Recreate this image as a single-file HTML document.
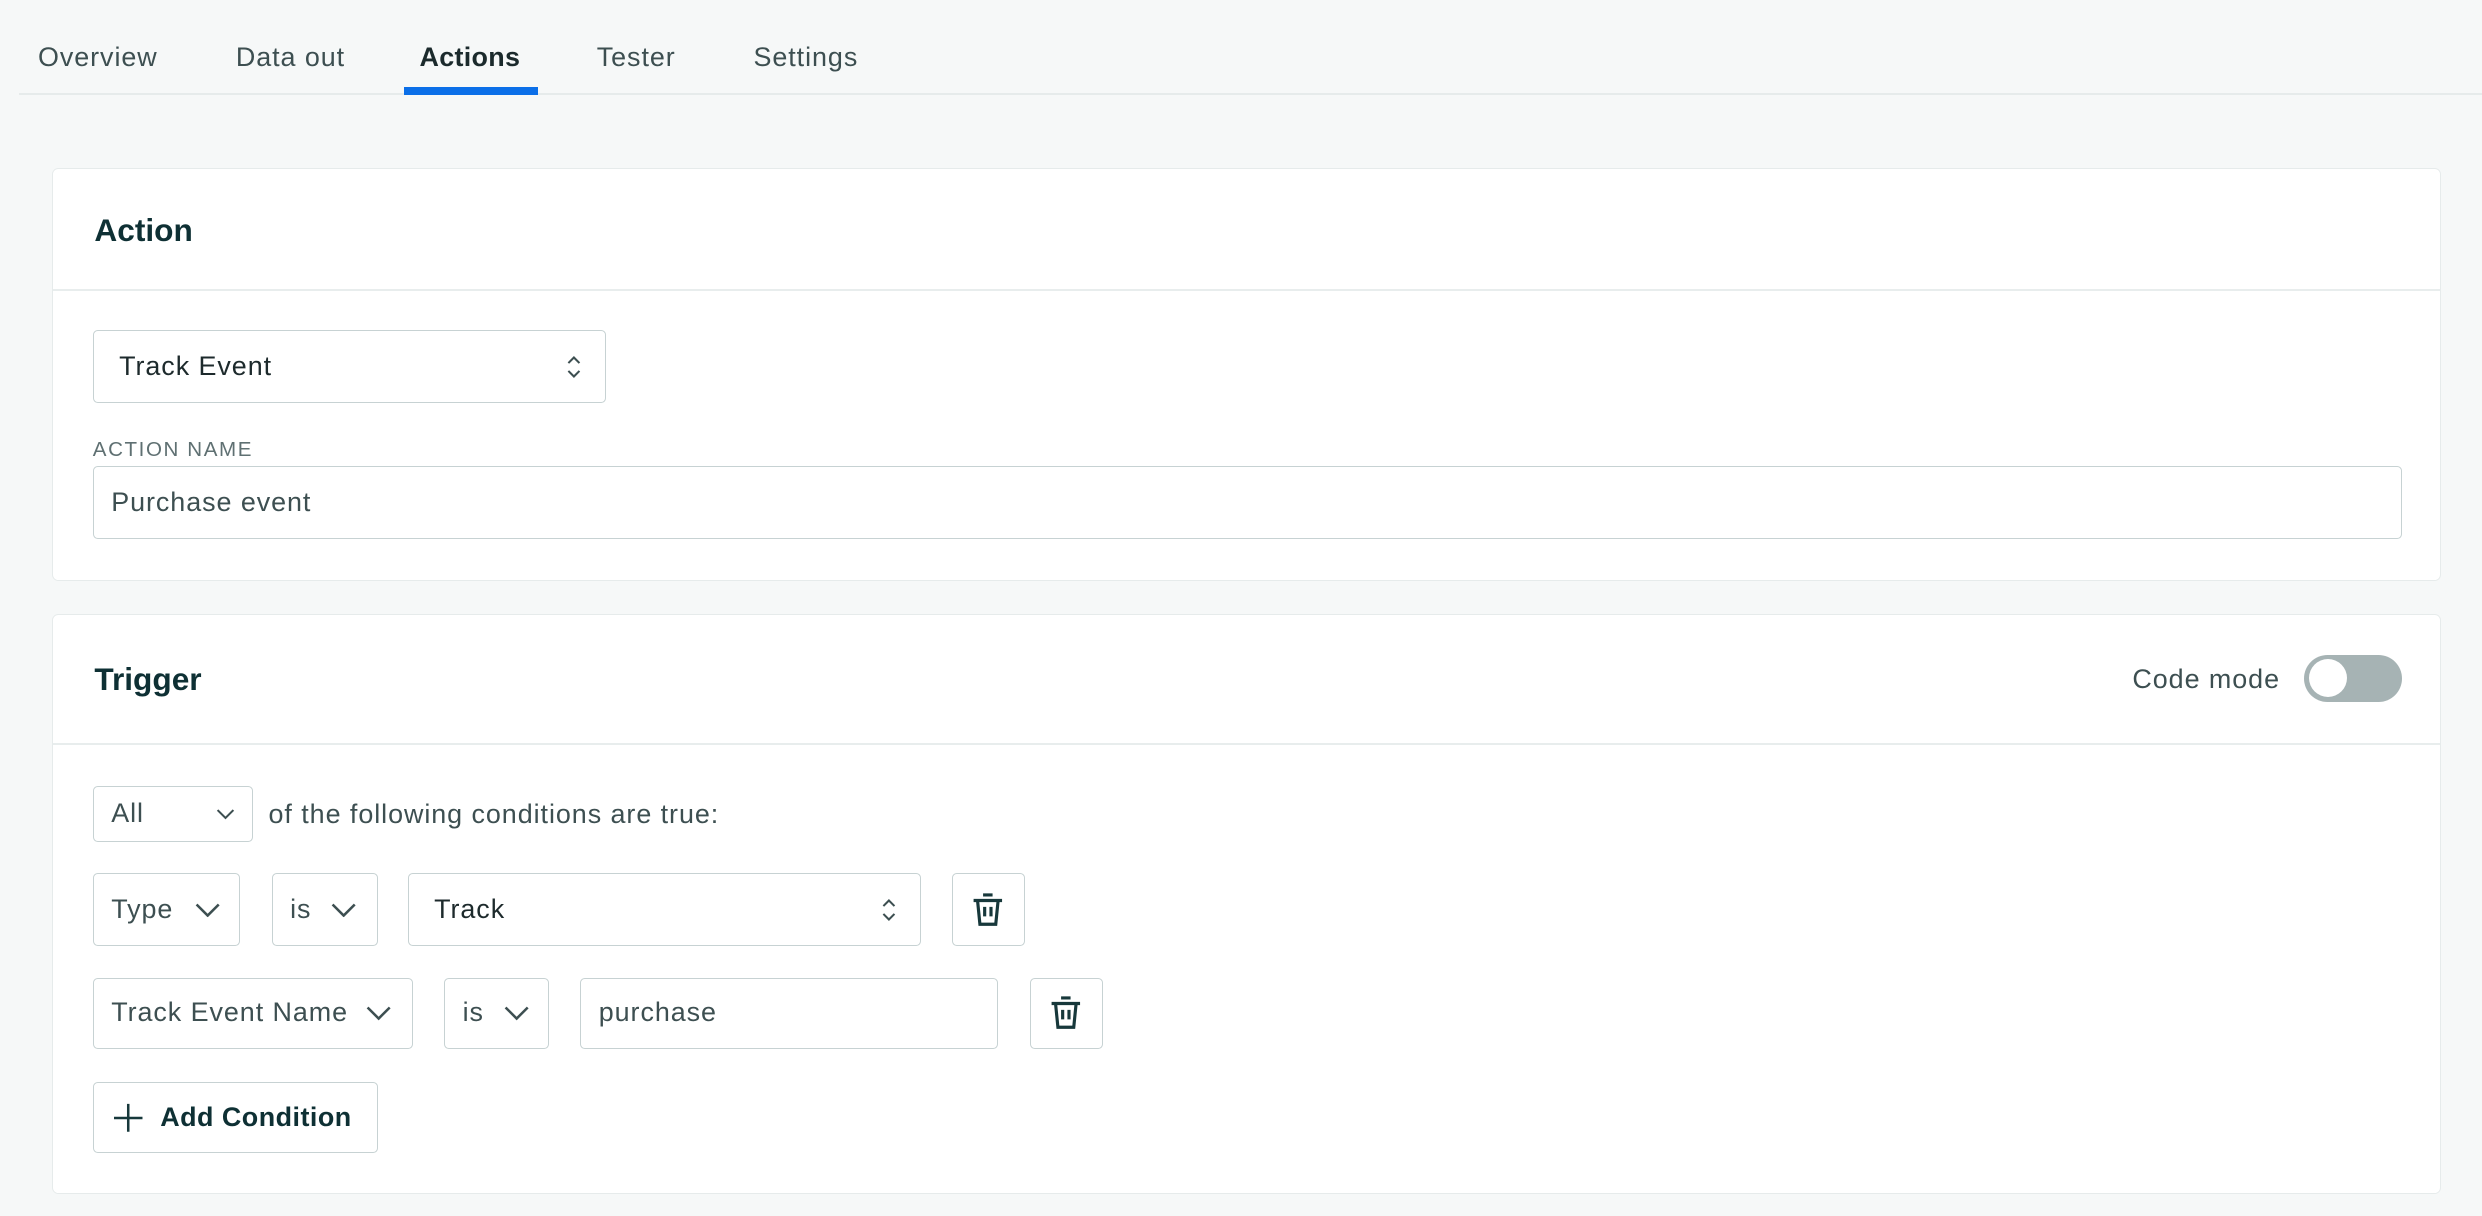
<!DOCTYPE html>
<html><head><meta charset="utf-8"><style>
html,body{margin:0;padding:0;background:#f6f8f8;overflow:hidden}
body{width:2482px;height:1216px}
#w{zoom:1.58291;position:relative;width:1568px;height:768px;font-family:"Liberation Sans",Arial,sans-serif;color:#3d4f51;letter-spacing:0.6px}
.a{position:absolute}
.tab{position:absolute;top:25px;font-size:17px;color:#3d4f51;line-height:22px}
.card{position:absolute;left:33px;width:1509px;background:#fff;border:1px solid #e6ebeb;border-radius:4px;box-sizing:border-box}
.h{position:absolute;left:26px;font-size:20px;font-weight:bold;color:#0e3034;letter-spacing:0}
.hr{position:absolute;left:0;right:0;height:1px;background:#e8eded}
.f{position:absolute;border:1px solid #c7d2d3;border-radius:3px;box-sizing:border-box;background:#fff;font-size:17px;line-height:20px}
.f span{position:absolute;left:11px;top:50%;transform:translateY(-50%);white-space:nowrap}
.f svg{position:absolute;top:50%;transform:translateY(-50%)}
</style></head><body><div id="w">
<div class="tab" style="left:24px">Overview</div>
<div class="tab" style="left:149px">Data out</div>
<div class="tab" style="left:265px;color:#1b2a2c;font-weight:bold;letter-spacing:0.2px">Actions</div>
<div class="tab" style="left:377px">Tester</div>
<div class="tab" style="left:476px">Settings</div>
<div class="a" style="left:12px;right:0;top:59px;height:1px;background:#e6ebeb"></div>
<div class="a" style="left:255px;width:85px;top:55px;height:5px;background:#0b6fe8"></div>

<div class="card" style="top:106px;height:261px">
 <div class="h" style="top:27px">Action</div>
 <div class="hr" style="top:76px"></div>
 <div class="f" style="left:25px;top:102px;width:324px;height:46px;color:#1d2a2c"><span style="left:16px">Track Event</span>
  <svg style="left:298px" width="10" height="16" viewBox="0 0 10 16"><path d="M1.5 5.5L5 2l3.5 3.5M1.5 10.5L5 14l3.5-3.5" fill="none" stroke="#3d4f51" stroke-width="1.3"/></svg></div>
 <div class="a" style="left:25px;top:170px;font-size:13px;letter-spacing:1px;color:#5f7072">ACTION NAME</div>
 <div class="f" style="left:25px;top:188px;width:1459px;height:46px"><span>Purchase event</span></div>
</div>

<div class="card" style="top:388px;height:366px">
 <div class="h" style="top:29px">Trigger</div>
 <div class="a" style="right:101px;top:31px;font-size:17px;color:#3d4f51">Code mode</div>
 <div class="a" style="left:1422px;top:25px;width:62px;height:30px;border-radius:15px;background:#a6b3b4"></div>
 <div class="a" style="left:1425px;top:28px;width:24px;height:24px;border-radius:12px;background:#fff"></div>
 <div class="hr" style="top:81px"></div>

 <div class="f" style="left:25px;top:108px;width:101px;height:35px"><span>All</span>
  <svg style="left:77px" width="12" height="8" viewBox="0 0 12 8"><path d="M1 1.5l5 5 5-5" fill="none" stroke="#3d4f51" stroke-width="1.3"/></svg></div>
 <div class="a" style="left:136px;top:116px;font-size:17px">of the following conditions are true:</div>

 <div class="f" style="left:25px;top:163px;width:93px;height:46px"><span>Type</span>
  <svg style="left:64px" width="16" height="10" viewBox="0 0 16 10"><path d="M1 1.5l7 7 7-7" fill="none" stroke="#3d4f51" stroke-width="1.6"/></svg></div>
 <div class="f" style="left:138px;top:163px;width:67px;height:46px"><span>is</span>
  <svg style="left:37px" width="16" height="10" viewBox="0 0 16 10"><path d="M1 1.5l7 7 7-7" fill="none" stroke="#3d4f51" stroke-width="1.6"/></svg></div>
 <div class="f" style="left:224px;top:163px;width:324px;height:46px;color:#1d2a2c"><span style="left:16px">Track</span>
  <svg style="left:298px" width="10" height="16" viewBox="0 0 10 16"><path d="M1.5 5.5L5 2l3.5 3.5M1.5 10.5L5 14l3.5-3.5" fill="none" stroke="#3d4f51" stroke-width="1.3"/></svg></div>
 <div class="f" style="left:568px;top:163px;width:46px;height:46px">
  <svg style="left:12px" width="20" height="22" viewBox="0 0 20 22"><path d="M7 1.5h6M1 5h18M3.5 5l1.5 15h10l1.5-15M8 9v6M12 9v6" fill="none" stroke="#17383b" stroke-width="2"/></svg></div>

 <div class="f" style="left:25px;top:229px;width:202px;height:45px"><span>Track Event Name</span>
  <svg style="left:172px" width="16" height="10" viewBox="0 0 16 10"><path d="M1 1.5l7 7 7-7" fill="none" stroke="#3d4f51" stroke-width="1.6"/></svg></div>
 <div class="f" style="left:247px;top:229px;width:66px;height:45px"><span>is</span>
  <svg style="left:37px" width="16" height="10" viewBox="0 0 16 10"><path d="M1 1.5l7 7 7-7" fill="none" stroke="#3d4f51" stroke-width="1.6"/></svg></div>
 <div class="f" style="left:333px;top:229px;width:264px;height:45px"><span>purchase</span></div>
 <div class="f" style="left:617px;top:229px;width:46px;height:45px">
  <svg style="left:12px" width="20" height="22" viewBox="0 0 20 22"><path d="M7 1.5h6M1 5h18M3.5 5l1.5 15h10l1.5-15M8 9v6M12 9v6" fill="none" stroke="#17383b" stroke-width="2"/></svg></div>

 <div class="f" style="left:25px;top:295px;width:180px;height:45px;color:#0e3034;font-weight:bold;letter-spacing:0.3px">
  <svg style="left:13px" width="18" height="18" viewBox="0 0 18 18"><path d="M9 0v18M0 9h18" fill="none" stroke="#17383b" stroke-width="1.6"/></svg>
  <span style="left:42px">Add Condition</span></div>
</div>
</div></body></html>
